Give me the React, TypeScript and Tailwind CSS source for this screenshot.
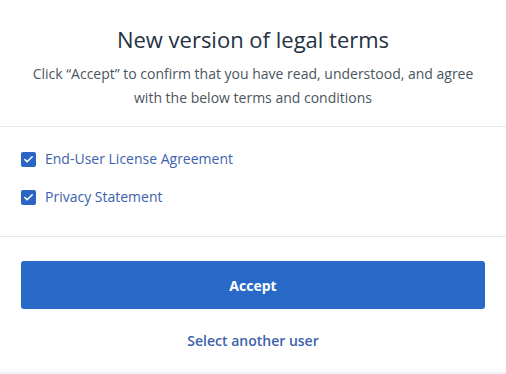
import { Check } from "lucide-react";

const terms = ["End-User License Agreement", "Privacy Statement"];

function Checkbox() {
  return (
    <span className="flex h-[15px] w-[15px] items-center justify-center rounded-[2px] bg-[#2a66c4]">
      <Check className="h-[11px] w-[11px] text-white" strokeWidth={3.5} />
    </span>
  );
}

export default function App() {
  return (
    <div
      className="flex h-[374px] w-[506px] flex-col bg-white"
      style={{ fontFamily: '"Open Sans", sans-serif' }}
    >
      <div className="flex h-[127px] flex-col items-center border-b border-[#e4e8f0] pt-[24px] text-center">
        <h1 className="text-[22px] leading-[30px] text-[#243142]">New version of legal terms</h1>
        <p className="mt-[8px] px-[28px] text-[14px] leading-[24px] text-[#4b5560]">
          Click “Accept” to confirm that you have read, understood, and agree with the below terms and conditions
        </p>
      </div>
      <div className="flex h-[110px] flex-col gap-[18px] border-b border-[#e4e8f0] pt-[22px] pl-[21px]">
        {terms.map((t) => (
          <label key={t} className="flex items-center gap-[9px]">
            <Checkbox />
            <span className="text-[14px] leading-[20px] text-[#3d62ad]">{t}</span>
          </label>
        ))}
      </div>
      <div className="flex flex-1 flex-col px-[21px] pt-[24px]">
        <button className="h-[48px] w-full rounded-[3px] bg-[#2869c7] text-[14px] font-bold text-white">
          Accept
        </button>
        <button className="mt-[21px] self-center text-[14px] font-semibold text-[#3d62ad]">
          Select another user
        </button>
      </div>
      <div className="h-[2px] bg-[#eef1f7]" />
    </div>
  );
}
